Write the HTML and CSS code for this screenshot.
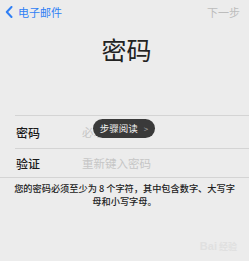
FILE: index.html
```html
<!DOCTYPE html>
<html lang="zh-CN">
<head>
<meta charset="utf-8">
<link rel="stylesheet" href="styles.css">
</head>
<body>
<div class="screen">
  <div class="nav">
    <div class="back">
      <svg class="chev" width="8" height="12" viewBox="0 0 8 12"><path d="M6.5 1 L1.8 6 L6.5 11" fill="none" stroke="#2f7ff5" stroke-width="2" stroke-linecap="round" stroke-linejoin="round"/></svg>
      <span>电子邮件</span>
    </div>
    <div class="next">下一步</div>
  </div>
  <h1 class="title">密码</h1>
  <div class="form">
    <div class="row first">
      <div class="label">密码</div>
      <div class="input">必填</div>
      <div class="pill">步骤阅读<span class="pchev">&gt;</span></div>
    </div>
    <div class="row second">
      <div class="label">验证</div>
      <div class="input">重新键入密码</div>
    </div>
  </div>
  <p class="help">您的密码必须至少为 8 个字符，其中包含数字、大写字<br>母和小写字母。</p>
  <div class="mark">Bai<span>经验</span></div>
</div>
</body>
</html>
```
FILE: styles.css
```css
html, body {
  margin: 0;
  padding: 0;
  background: #ececec;
}
body {
  font-family: "Noto Sans CJK SC", "Noto Sans", sans-serif;
  color: #1e1e1e;
}
.screen {
  position: relative;
  width: 249px;
  height: 261px;
  overflow: hidden;
}
.nav {
  height: 24px;
  display: flex;
  align-items: center;
  justify-content: space-between;
  padding: 0 9px 0 5px;
}
.back {
  display: flex;
  align-items: center;
  gap: 5px;
  color: #2f7ff5;
  font-size: 11px;
  line-height: 14px;
}
.chev { display: block; }
.next {
  color: #bcbcbc;
  font-size: 11px;
  line-height: 14px;
}
.title {
  margin: 10px 0 0;
  text-align: center;
  font-size: 25px;
  line-height: 30px;
  font-weight: 400;
  color: #222;
  padding-left: 4px;
}
.form {
  margin-top: 51px;
  border-bottom: 1px solid #d4d4d4;
}
.row {
  position: relative;
  margin-left: 15px;
  display: flex;
  align-items: center;
  border-top: 1px solid #d4d4d4;
}
.row.first { height: 32px; }
.row.second { height: 28px; }
.label {
  width: 66px;
  padding-left: 1px;
  font-size: 12px;
  font-weight: 500;
  color: #1a1a1a;
}
.input {
  font-size: 11.5px;
  color: #c6c6c6;
}
.pill {
  position: absolute;
  left: 78px;
  top: 3px;
  width: 62px;
  height: 19px;
  border-radius: 10px;
  background: #3a3a3a;
  color: #f2f2f2;
  font-size: 9.5px;
  line-height: 19px;
  display: flex;
  align-items: center;
  justify-content: center;
  gap: 6px;
}
.pchev {
  color: #aaa;
  font-size: 8px;
}
.help {
  margin: 4px 0 0;
  text-align: center;
  font-size: 9.2px;
  line-height: 13px;
  font-weight: 500;
  color: #222;
}
.mark {
  position: absolute;
  right: 12px;
  bottom: 8px;
  font-size: 11px;
  color: #e0e0e0;
  font-family: "Liberation Sans", sans-serif;
  font-weight: 700;
}
.mark span { font-size: 9px; margin-left: 2px; font-family: "Noto Sans CJK SC", sans-serif; }
```
